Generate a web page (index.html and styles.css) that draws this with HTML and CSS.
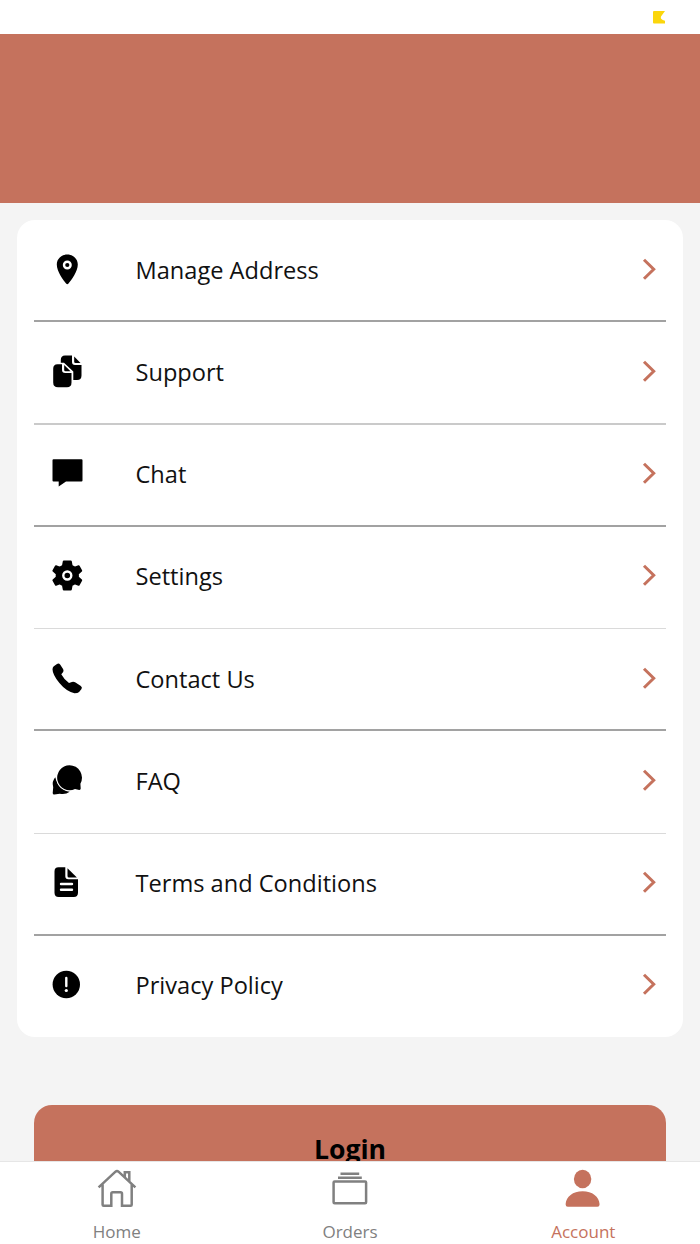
FILE: index.html
```
<!DOCTYPE html>
<html lang="en">
<head>
  <meta charset="UTF-8">
  <meta name="viewport" content="width=device-width, initial-scale=1.0">
  <title>Account</title>
  <link rel="stylesheet" href="styles.css">
</head>
<body>
  <div class="status-bar">
    <svg class="status-icon" viewBox="0 0 12 13"><path d="M1 0h11L8 5.500q-1.200 3 4 4.300v2.700H1q-1 0-1-1V1q0-1 1-1z" fill="#fbd60c"/></svg>
  </div>
  <header class="banner"></header>

  <main class="content">
    <ul class="menu">
      <li class="menu-item line-dark">
        <svg class="menu-icon" viewBox="0 0 36 36">
          <path d="M18.300 3.500C12.300 3.500 7.800 7.900 7.800 13.600c0 7.400 6.700 15.600 9.300 19q1.200 1.400 2.400 0c2.600-3.400 9.300-11.600 9.300-19C28.800 7.900 24.300 3.500 18.300 3.500z"/>
          <circle class="ring" cx="18.300" cy="14" r="3.300"/>
        </svg>
        <span class="menu-label">Manage Address</span>
        <svg class="chevron" viewBox="0 0 16 24"><path d="M3 2.700l9.700 9.500L3 21.700"/></svg>
      </li>
      <li class="menu-item line-mid">
        <svg class="menu-icon" viewBox="0 0 36 36">
          <path d="M16 2.500h7V9q0 3 3 3h6.500v10.500q0 4.500-4.500 4.500h-3.700v-8.500L15 9.800H11.800V7q0-4.500 4.200-4.500z"/>
          <path d="M25.200 3.500l6.300 6.500h-5q-1.300 0-1.300-1.300z"/>
          <path d="M8.500 11.200H13v5.500q0 3.300 3.300 3.300h6.200v9.500q0 4.800-4.500 4.800H9q-4.800 0-4.800-4.800V15.700q0-4.500 4.300-4.500z"/>
          <path d="M15.200 12l6.300 6.200h-5q-1.300 0-1.300-1.300z"/>
        </svg>
        <span class="menu-label">Support</span>
        <svg class="chevron" viewBox="0 0 16 24"><path d="M3 2.700l9.700 9.500L3 21.700"/></svg>
      </li>
      <li class="menu-item line-dark">
        <svg class="menu-icon" viewBox="0 0 36 36">
          <path d="M4.500 4.200h28q1 0 1 1v20.300q0 1-1 1H17l-7.300 5v-5H4.500q-1 0-1-1V5.200q0-1 1-1z"/>
        </svg>
        <span class="menu-label">Chat</span>
        <svg class="chevron" viewBox="0 0 16 24"><path d="M3 2.700l9.700 9.500L3 21.700"/></svg>
      </li>
      <li class="menu-item line-light">
        <svg class="menu-icon" viewBox="0 0 36 36">
          <path class="rounded" d="M14.800 4.500h7l.8 4.300 3.200 1.900 3.900-1.500 2.500 4.600-3.300 2.900v3.600l3.300 2.900-2.500 4.600-3.900-1.500-3.200 1.900-.8 4.300h-7l-.8-4.300-3.200-1.900-3.900 1.500-2.500-4.600 3.300-2.900v-3.600l-3.300-2.900 2.500-4.600 3.900 1.500 3.200-1.900z"/>
          <circle class="ring" cx="18.300" cy="18.500" r="4"/>
        </svg>
        <span class="menu-label">Settings</span>
        <svg class="chevron" viewBox="0 0 16 24"><path d="M3 2.700l9.700 9.500L3 21.700"/></svg>
      </li>
      <li class="menu-item line-dark">
        <svg class="menu-icon" viewBox="0 0 36 36">
          <path d="M4.800 6.200L8 3.900q1.800-1.200 3.300.8l2.900 4.600q.9 1.700-.4 3.100l-1.500 1.900q2.500 4.900 7.700 8.700l2.900-1.100q1.700-.6 3.200.3l5.400 3.500q2.200 1.500 1 3.300l-2.400 3q-1.200 1.300-4.600 1.300Q17.200 31.300 10.400 23 3.600 14.800 3.500 9.200q.1-2 1.300-3z"/>
        </svg>
        <span class="menu-label">Contact Us</span>
        <svg class="chevron" viewBox="0 0 16 24"><path d="M3 2.700l9.700 9.500L3 21.700"/></svg>
      </li>
      <li class="menu-item line-light">
        <svg class="menu-icon" viewBox="0 0 36 36">
          <path d="M6.300 15.300Q2.500 19.500 4.200 25.300L3.700 31q0 1.600 1.600 1.500l5.500-.8q5.700 1.200 9.900-2Q9.300 28.500 6.300 15.300z"/>
          <path class="bubble" d="M20.500 3.200A12.500 12.500 0 1 0 26 27l4.200.9q1.600.1 1.500-1.500l-.3-4.600A12.500 12.500 0 0 0 20.500 3.200z"/>
        </svg>
        <span class="menu-label">FAQ</span>
        <svg class="chevron" viewBox="0 0 16 24"><path d="M3 2.700l9.700 9.500L3 21.700"/></svg>
      </li>
      <li class="menu-item line-dark">
        <svg class="menu-icon" viewBox="0 0 36 36">
          <path d="M9.500 3.300h6.800v9q0 3 3 3H29v13.500q0 4.200-4.200 4.200H9.700q-4.200 0-4.200-4.200V7.500q0-4.200 4-4.200z"/>
          <path d="M18.500 4.200l9.400 9.300h-7.900q-1.500 0-1.500-1.500z"/>
          <path class="cut" d="M12 20h11M12 25.700h11"/>
        </svg>
        <span class="menu-label">Terms and Conditions</span>
        <svg class="chevron" viewBox="0 0 16 24"><path d="M3 2.700l9.700 9.500L3 21.700"/></svg>
      </li>
      <li class="menu-item">
        <svg class="menu-icon" viewBox="0 0 36 36">
          <circle cx="17.300" cy="18.500" r="13.700"/>
          <path class="cut" d="M17.300 12v8"/>
          <circle cx="17.300" cy="24.500" r="1.600" fill="#fff"/>
        </svg>
        <span class="menu-label">Privacy Policy</span>
        <svg class="chevron" viewBox="0 0 16 24"><path d="M3 2.700l9.700 9.500L3 21.700"/></svg>
      </li>
    </ul>

    <button class="login-btn">Login</button>
  </main>

  <nav class="tab-bar">
    <a class="tab">
      <svg class="tab-icon outline" viewBox="0 0 44 44">
        <path d="M3.600 22.300L20.500 6.700q1.500-1.300 3 0L40.400 22.300M7.600 19.500v20.200q0 1 1 1h7.700v-12q0-1.500 1.500-1.500h7.700q1.500 0 1.500 1.500v12h8.700q1 0 1-1V19.500M29.800 12V7.300h4.500v9.500"/>
      </svg>
      <span>Home</span>
    </a>
    <a class="tab">
      <svg class="tab-icon outline" viewBox="0 0 44 44">
        <path d="M12.500 8.700h18.700M10 12.700h23.800"/>
        <rect x="5.600" y="16.600" width="32.500" height="21.700" rx="1"/>
      </svg>
      <span>Orders</span>
    </a>
    <a class="tab active">
      <svg class="tab-icon" viewBox="0 0 44 44">
        <ellipse cx="21.600" cy="14" rx="8.700" ry="9.200"/>
        <path d="M4.600 39.200c.4-7.600 7.300-13 17-13s16.600 5.400 17 13q0 2.500-2.200 2.500H6.800q-2.200 0-2.200-2.500z"/>
      </svg>
      <span>Account</span>
    </a>
  </nav>
</body>
</html>
```
FILE: styles.css
```
:root {
  --primary: #c5725d;
  --page-bg: #f4f4f4;
  --muted: #808080;
}

* {
  box-sizing: border-box;
}

body {
  display: flex;
  flex-direction: column;
  height: 100vh;
  margin: 0;
  overflow: hidden;
  background-color: var(--page-bg);
  color: #111;
  font-family: "Open Sans", "Noto Sans", sans-serif;
}

.status-bar {
  display: flex;
  flex-shrink: 0;
  justify-content: flex-end;
  height: 34px;
  padding: 11px 35px 0 0;
  background-color: #fff;
}

.status-icon {
  width: 12px;
  height: 13px;
}

.banner {
  flex-shrink: 0;
  height: 169px;
  background-color: var(--primary);
}

.content {
  flex: 1;
  min-height: 0;
  padding: 17px 17px 0;
  overflow: hidden;
}

/* Menu card */
.menu {
  margin: 0;
  padding: 0 17px;
  list-style: none;
  background-color: #fff;
  border-radius: 18px;
}

.menu-item {
  display: flex;
  align-items: center;
  height: 102.25px;
  padding: 0 9px 3px 15px;
  border-bottom: 2px solid transparent;
}

.menu-item:last-child {
  height: 101px;
  padding-bottom: 2px;
}

.line-dark {
  border-color: #a2a2a2;
}

.line-mid {
  border-color: #cacaca;
}

.line-light {
  border-bottom-width: 1px;
  border-color: #dadada;
  padding-bottom: 4px;
}

.menu-icon {
  width: 36px;
  height: 36px;
  fill: #000;
}

.menu-icon .ring {
  fill: none;
  stroke: #fff;
  stroke-width: 2.4;
}

.menu-icon .rounded {
  stroke: #000;
  stroke-width: 2;
  stroke-linejoin: round;
}

.menu-icon .bubble {
  stroke: #fff;
  stroke-width: 1.6;
  paint-order: stroke;
}

.menu-icon .cut {
  stroke: #fff;
  stroke-width: 2.4;
  stroke-linecap: round;
}

.menu-label {
  flex: 1;
  padding: 2px 0 0 50.5px;
  font-size: 23.6px;
}

.chevron {
  width: 16px;
  height: 24px;
  fill: none;
  stroke: var(--primary);
  stroke-width: 3;
}

/* Login button */
.login-btn {
  display: block;
  width: calc(100% - 34px);
  height: 88px;
  margin: 68px 17px 0;
  border: none;
  border-radius: 18px;
  background-color: var(--primary);
  color: #000;
  font-family: inherit;
  font-size: 26.6px;
  font-weight: 700;
}

/* Bottom navigation */
.tab-bar {
  display: flex;
  flex-shrink: 0;
  height: 83px;
  border-top: 1px solid #e6e6e6;
  background-color: #fff;
}

.tab {
  display: flex;
  flex: 1;
  flex-direction: column;
  align-items: center;
  padding-top: 3px;
  color: var(--muted);
  font-size: 17px;
}

.tab.active {
  color: var(--primary);
}

.tab-icon {
  width: 44px;
  height: 44px;
  margin-bottom: 11px;
  fill: currentColor;
}

.tab-icon.outline {
  fill: none;
  stroke: currentColor;
  stroke-width: 2.5;
}
```
